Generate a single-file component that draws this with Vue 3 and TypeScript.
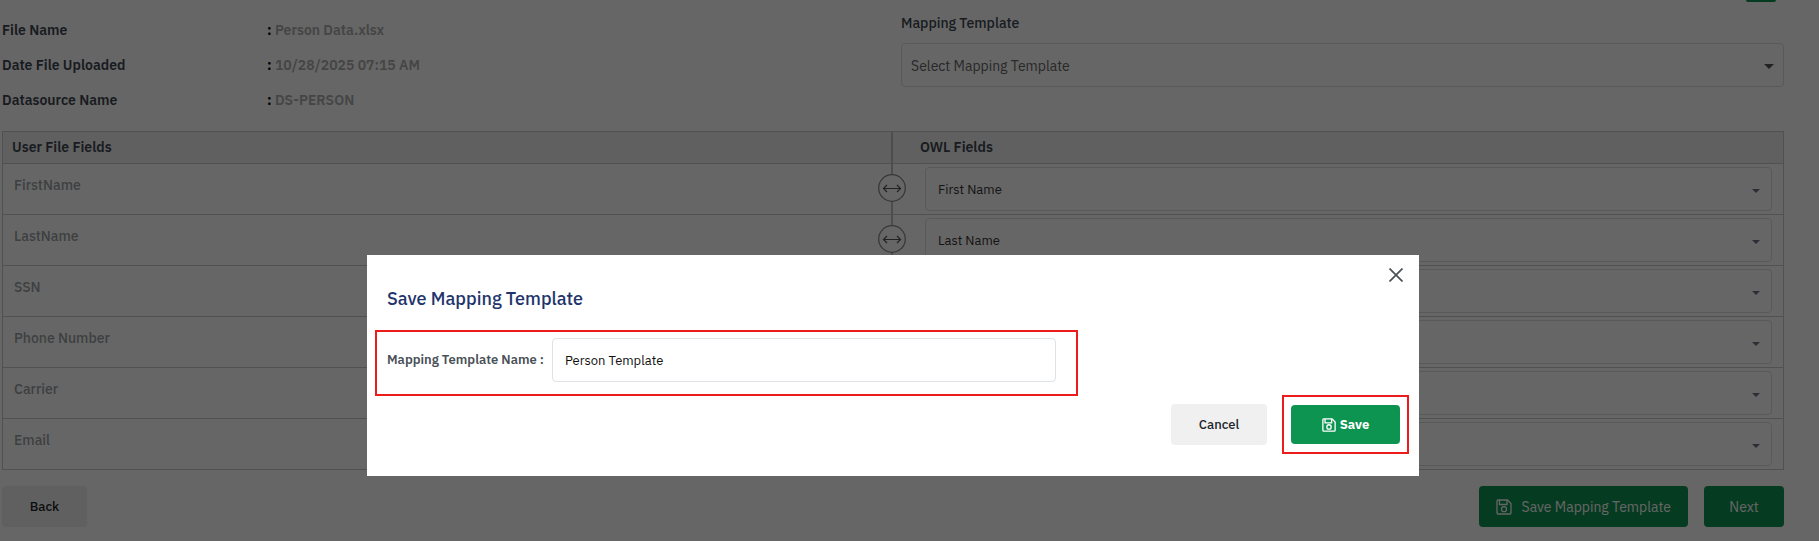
<script setup lang="ts">
import { ref } from 'vue'

interface Mapping {
  source: string
  target: string
}

const fileInfo = [
  { label: 'File Name', value: 'Person Data.xlsx' },
  { label: 'Date File Uploaded', value: '10/28/2025 07:15 AM' },
  { label: 'Datasource Name', value: 'DS-PERSON' },
]

const mappings = ref<Mapping[]>([
  { source: 'FirstName', target: 'First Name' },
  { source: 'LastName', target: 'Last Name' },
  { source: 'SSN', target: 'SSN' },
  { source: 'Phone Number', target: 'Phone Number' },
  { source: 'Carrier', target: 'Carrier' },
  { source: 'Email', target: 'Email' },
])

const owlFields = ['First Name', 'Last Name', 'SSN', 'Phone Number', 'Carrier', 'Email']
const template = ref('')
const templateName = ref('Person Template')
const dialogOpen = ref(true)
</script>

<template>
  <div class="page">
    <div class="top-action" aria-hidden="true"></div>
    <main class="content">
      <section class="summary">
        <dl class="info">
          <div v-for="item in fileInfo" :key="item.label" class="info-row">
            <dt>{{ item.label }}</dt>
            <dd><span class="colon">:</span> {{ item.value }}</dd>
          </div>
        </dl>
        <div class="template-field">
          <label for="template">Mapping Template</label>
          <div class="select-wrap">
            <select id="template" v-model="template" class="select placeholder">
              <option value="">Select Mapping Template</option>
            </select>
            <span class="caret large"></span>
          </div>
        </div>
      </section>

      <table class="mapping">
        <thead>
          <tr>
            <th scope="col">User File Fields</th>
            <th scope="col">OWL Fields</th>
          </tr>
        </thead>
        <tbody>
          <tr v-for="(row, i) in mappings" :key="row.source">
            <td class="source">
              <label :for="`owl-${i}`">{{ row.source }}</label>
              <span class="link-badge">
                <svg viewBox="0 0 28 28" width="28" height="28" fill="none" aria-hidden="true">
                  <circle cx="14" cy="14" r="13.3" fill="#fff" stroke="#8c8c8c" stroke-width="1.3" />
                  <path d="M5.5 14.5h17M9 11l-3.5 3.5L9 18M19 11l3.5 3.5L19 18" stroke="#555" stroke-width="1.2" />
                </svg>
              </span>
            </td>
            <td class="target">
              <div class="select-wrap">
                <select :id="`owl-${i}`" v-model="row.target" class="select">
                  <option v-for="field in owlFields" :key="field">{{ field }}</option>
                </select>
                <span class="caret"></span>
              </div>
            </td>
          </tr>
        </tbody>
      </table>

      <footer class="actions">
        <button type="button" class="btn light back">Back</button>
        <div class="actions-right">
          <button type="button" class="btn green save-template" @click="dialogOpen = true">
            <svg viewBox="0 0 16 16" width="16" height="16" fill="none" stroke="currentColor" stroke-width="1.3" aria-hidden="true">
              <path d="M1 2a1 1 0 0 1 1-1h9.5L15 4.5V14a1 1 0 0 1-1 1H2a1 1 0 0 1-1-1z" />
              <path d="M3.5 1v4.5h7.5V1" />
              <circle cx="8" cy="10.2" r="2.5" />
            </svg>
            Save Mapping Template
          </button>
          <button type="button" class="btn green next">Next</button>
        </div>
      </footer>
    </main>

    <div v-if="dialogOpen" class="overlay">
      <section class="dialog" role="dialog" aria-modal="true" aria-labelledby="dialog-title">
        <button type="button" class="close" aria-label="Close" @click="dialogOpen = false">
          <svg viewBox="0 0 14 14" width="14" height="14" fill="none" stroke="#495057" stroke-width="1.7" aria-hidden="true">
            <path d="M.5.5l13 13M13.5.5l-13 13" />
          </svg>
        </button>
        <h2 id="dialog-title">Save Mapping Template</h2>
        <div class="name-row">
          <label for="template-name">Mapping Template Name :</label>
          <input id="template-name" v-model="templateName" type="text" />
        </div>
        <div class="dialog-actions">
          <button type="button" class="btn light cancel" @click="dialogOpen = false">Cancel</button>
          <div class="save-frame">
            <button type="button" class="btn green save">
              <svg viewBox="0 0 16 16" width="14" height="14" fill="none" stroke="currentColor" stroke-width="1.5" aria-hidden="true">
                <path d="M1 2a1 1 0 0 1 1-1h9.5L15 4.5V14a1 1 0 0 1-1 1H2a1 1 0 0 1-1-1z" />
                <path d="M3.5 1v4.5h7.5V1" />
                <circle cx="8" cy="10.2" r="2.5" />
              </svg>
              Save
            </button>
          </div>
        </div>
      </section>
    </div>
  </div>
</template>

<style>
body {
  margin: 0;
  background: #fff;
}
</style>

<style scoped>
.page,
.page * {
  box-sizing: border-box;
}

.page {
  position: relative;
  min-height: 100vh;
  overflow: hidden;
  font-family: "IBM Plex Sans", Roboto, "Liberation Sans", sans-serif;
  font-size: 14px;
  line-height: 20px;
  color: #495057;
}

button,
input,
select {
  font-family: inherit;
  margin: 0;
}

.top-action {
  position: absolute;
  top: 0;
  right: 43px;
  width: 30px;
  height: 2px;
  background: #0d9450;
  border-radius: 0 0 4px 4px;
}

.content {
  padding: 12px 35px 14px 2px;
}

.summary {
  display: grid;
  grid-template-columns: 1fr 1fr;
  height: 119px;
}

.info {
  margin: 0;
}

.info-row {
  display: grid;
  grid-template-columns: 265px 1fr;
  align-items: center;
  height: 35px;
  font-weight: 600;
}

.info-row dt {
  color: #3c4650;
}

.info-row dd {
  margin: 0;
  color: #adadad;
}

.colon {
  color: #000;
  font-weight: 700;
}

.template-field {
  padding: 1px 0 0 8px;
}

.template-field label {
  display: block;
  margin-bottom: 10px;
  font-weight: 500;
  color: #3c4650;
}

.select-wrap {
  position: relative;
}

.select {
  display: block;
  width: 100%;
  height: 44px;
  padding: 0 40px 0 12px;
  border: 1px solid #dcdfe3;
  border-radius: 4px;
  background: #fff;
  color: #343434;
  font-size: 13px;
  appearance: none;
}

.select.placeholder {
  padding: 2px 40px 0 9px;
  font-size: 14px;
  color: #666;
}

.caret {
  position: absolute;
  right: 12px;
  top: 22px;
  border: 4px solid transparent;
  border-top-color: #6c7781;
  border-bottom: 0;
  pointer-events: none;
}

.caret.large {
  right: 10px;
  top: 21px;
  border-width: 5px;
  border-top-color: #555;
  border-bottom: 0;
}

.mapping {
  width: 100%;
  table-layout: fixed;
  border: 1px solid #cacaca;
  border-bottom: 0;
  border-spacing: 0;
}

.mapping th,
.mapping td {
  padding: 0;
  border-bottom: 1px solid #cacaca;
}

.mapping th {
  height: 32px;
  padding: 0 27px 2px;
  background: #f0f0f0;
  text-align: left;
  font-weight: 600;
  color: #3c4650;
}

.mapping th:first-child {
  padding-left: 9px;
}

.mapping th:first-child,
.mapping .source {
  border-right: 2px solid #c0c0c0;
}

.mapping td {
  height: 51px;
}

.source {
  position: relative;
  vertical-align: top;
}

.mapping .source {
  padding: 11px 0 0 11px;
}

.source label {
  font-weight: 500;
  color: #9a9fa4;
}

.link-badge {
  position: absolute;
  top: 10px;
  right: -15px;
  z-index: 1;
  height: 28px;
}

.link-badge svg {
  display: block;
}

.mapping .target {
  padding: 0 11px 0 32px;
}

.actions,
.actions-right {
  display: flex;
  justify-content: space-between;
}

.actions {
  margin-top: 16px;
}

.actions-right {
  gap: 16px;
}

.btn {
  display: flex;
  align-items: center;
  justify-content: center;
  height: 41px;
  padding: 0 28px;
  border: 0;
  border-radius: 4px;
  font-size: 14px;
  cursor: pointer;
}

.light {
  background: #f0f0f0;
  color: #212529;
  font-size: 13px;
  font-weight: 500;
}

.back {
  width: 85px;
}

.green {
  background: #0d9450;
  color: #fff;
}

.save-template {
  gap: 10px;
  padding: 0 17px;
}

.next {
  width: 80px;
}

.overlay {
  position: fixed;
  inset: 0;
  z-index: 10;
  display: flex;
  justify-content: center;
  align-items: flex-start;
  padding: 255px 35px 0 2px;
  background: rgba(0, 0, 0, 0.6);
}

.dialog {
  position: relative;
  width: 100%;
  max-width: 1052px;
  padding: 33px 10px 22px 8px;
  background: #fff;
}

.close {
  position: absolute;
  top: 9px;
  right: 12px;
  padding: 4px;
  border: 0;
  background: none;
  line-height: 0;
  cursor: pointer;
}

.dialog h2 {
  margin: 0 0 20px 12px;
  font-size: 18px;
  line-height: 22px;
  font-weight: 500;
  color: #22346b;
}

.name-row {
  display: flex;
  align-items: center;
  gap: 8px;
  width: 68%;
  min-width: 320px;
  height: 66px;
  padding: 0 20px 6px 10px;
  border: 2px solid #ed1c1c;
}

.name-row label {
  font-size: 13px;
  font-weight: 600;
}

.name-row input {
  flex: 1;
  min-width: 0;
  height: 44px;
  padding: 0 12px;
  border: 1px solid #dee2e6;
  border-radius: 4px;
  font-size: 13px;
  color: #111;
}

.dialog-actions {
  display: flex;
  justify-content: flex-end;
  align-items: center;
  gap: 15px;
  margin-top: -1px;
}

.cancel {
  width: 96px;
}

.save-frame {
  padding: 8px 7px;
  border: 2px solid #ed1c1c;
}

.save {
  gap: 4px;
  width: 109px;
  height: 39px;
  padding: 0;
  font-size: 13px;
  font-weight: 700;
}
</style>
